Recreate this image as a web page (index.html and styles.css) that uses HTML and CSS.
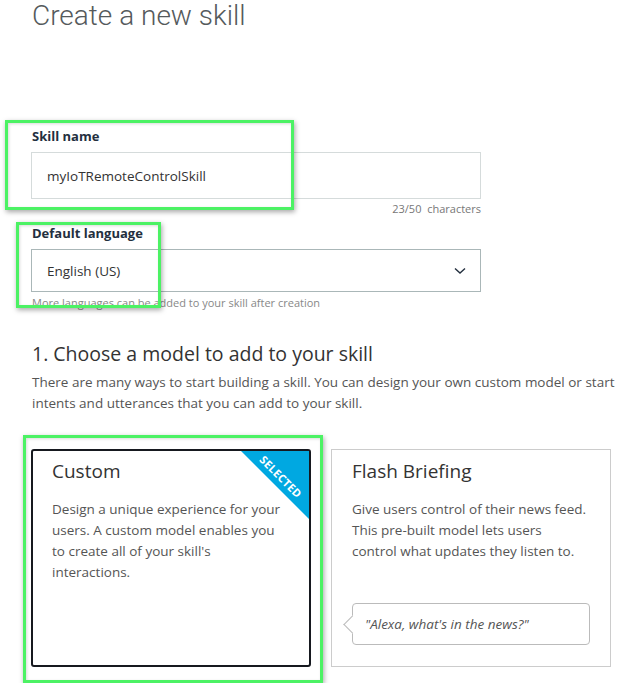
FILE: index.html
```html
<!DOCTYPE html>
<html>
<head>
<meta charset="utf-8">
<link rel="stylesheet" href="styles.css">
</head>
<body>
<div class="page">
  <h1 class="title">Create a new skill</h1>

  <div class="field field-name">
    <label class="label">Skill name</label>
    <div class="input">myIoTRemoteControlSkill</div>
    <div class="counter">23/50&nbsp; characters</div>
  </div>

  <div class="field field-lang">
    <label class="label">Default language</label>
    <div class="select">
      <span>English (US)</span>
      <svg class="chev" width="12" height="8" viewBox="0 0 12 8"><path d="M1 1.5 L6 6 L11 1.5" fill="none" stroke="#232f3e" stroke-width="1.4"/></svg>
    </div>
    <div class="hint">More languages can be added to your skill after creation</div>
  </div>

  <h2 class="section">1. Choose a model to add to your skill</h2>
  <p class="intro">There are many ways to start building a skill. You can design your own custom model or start<br>intents and utterances that you can add to your skill.</p>

  <div class="cards">
    <div class="card selected">
      <div class="ribbon"><span>SELECTED</span></div>
      <h3 class="card-title">Custom</h3>
      <p class="card-text">Design a unique experience for your users. A custom model enables you to create all of your skill's interactions.</p>
    </div>
    <div class="card">
      <h3 class="card-title">Flash Briefing</h3>
      <p class="card-text">Give users control of their news feed. This pre-built model lets users control what updates they listen to.</p>
      <div class="bubble">"Alexa, what's in the news?"</div>
    </div>
  </div>

  <div class="mark mark-1"></div>
  <div class="mark mark-2"></div>
  <div class="mark mark-3"></div>
</div>
</body>
</html>
```

FILE: styles.css
```css
* { box-sizing: border-box; }
html, body { margin: 0; padding: 0; background: #fff; }
body { overflow: hidden; width: 618px; height: 683px; }
.page {
  position: relative;
  padding: 0 0 0 31px;
  font-family: "Open Sans", "Noto Sans", sans-serif;
  color: #333;
}
.title {
  margin: 0;
  font-family: Roboto, "Open Sans", sans-serif;
  font-weight: 300;
  font-size: 28px;
  line-height: 32px;
  color: #555a5c;
  padding-left: 1px;
}
.field { width: 450px; }
.field-name { margin-top: 96px; }
.label {
  display: block;
  font-weight: 700;
  font-size: 13px;
  line-height: 16px;
  color: #232f3e;
  padding-left: 1px;
}
.input {
  margin-top: 8px;
  height: 47px;
  border: 1px solid #d5dbdb;
  padding: 0 15px;
  display: flex;
  align-items: center;
  font-size: 13.5px;
  color: #333;
}
.counter {
  margin-top: 2px;
  text-align: right;
  font-size: 11px;
  line-height: 16px;
  color: #777;
}
.field-lang { margin-top: 8px; }
.select {
  margin-top: 8px;
  height: 43px;
  border: 1px solid #aab7b8;
  padding: 0 14px 0 15px;
  display: flex;
  align-items: center;
  justify-content: space-between;
  font-size: 13.5px;
  color: #333;
}
.hint {
  margin-top: 3px;
  font-size: 11px;
  line-height: 16px;
  color: #888;
  padding-left: 1px;
}
.section {
  margin: 31px 0 0;
  font-weight: 400;
  font-size: 19.5px;
  line-height: 24px;
  color: #333;
  padding-left: 1px;
}
.intro {
  margin: 6px 0 0;
  width: 600px;
  white-space: nowrap;
  font-size: 13.5px;
  line-height: 21px;
  color: #555;
  padding-left: 1px;
}
.cards {
  display: flex;
  gap: 20px;
  margin-top: 35px;
}
.card {
  position: relative;
  width: 280px;
  height: 218px;
  border: 1px solid #ccc;
  padding: 7px 20px 0 20px;
}
.card.selected {
  border: 2px solid #16191f;
  border-radius: 3px;
  padding: 6px 19px 0 19px;
}
.ribbon {
  position: absolute;
  top: 0;
  right: 0;
  width: 68px;
  height: 68px;
  background: #00a8e1;
  clip-path: polygon(0 0, 100% 0, 100% 100%);
}
.ribbon span {
  position: absolute;
  top: 18px;
  right: -6px;
  width: 68px;
  text-align: center;
  transform: rotate(45deg);
  color: #fff;
  font-size: 11px;
  font-weight: 700;
  letter-spacing: 0.2px;
}
.card-title {
  margin: 0;
  font-weight: 400;
  font-size: 19px;
  line-height: 28px;
  color: #333;
}
.card-text {
  margin: 14px 0 0;
  max-width: 236px;
  font-size: 13.5px;
  line-height: 21px;
  color: #555;
}
.bubble {
  position: relative;
  margin-top: 41px;
  width: 238px;
  height: 42px;
  border: 1px solid #bbb;
  border-radius: 4px;
  padding: 0 12px;
  display: flex;
  align-items: center;
  font-style: italic;
  font-size: 13.5px;
  color: #555;
}
.bubble::before {
  content: "";
  position: absolute;
  left: -7px;
  top: 14px;
  width: 12px;
  height: 12px;
  background: #fff;
  border-left: 1px solid #bbb;
  border-bottom: 1px solid #bbb;
  transform: rotate(45deg);
}
.mark {
  position: absolute;
  border: 3px solid #4cf264;
  box-shadow: 1px 2px 5px rgba(0,0,0,0.35), inset 1px 1px 3px rgba(0,0,0,0.15);
}
.mark-1 { left: 5px; top: 120px; width: 289px; height: 90px; }
.mark-2 { left: 16px; top: 222px; width: 145px; height: 86px; }
.mark-3 { left: 23px; top: 435px; width: 300px; height: 248px; }
```
